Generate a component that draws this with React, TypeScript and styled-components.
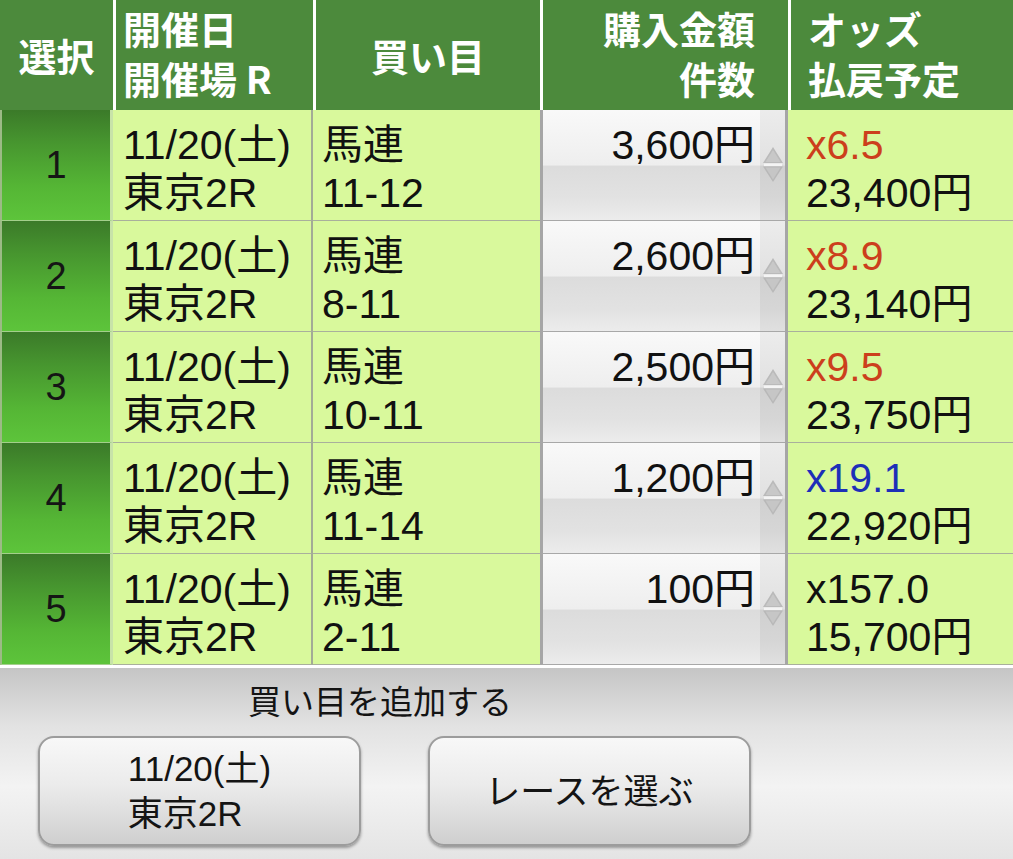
import React from 'react'
import styled, { createGlobalStyle } from 'styled-components'

const GlobalStyle = createGlobalStyle`
  html, body {
    margin: 0;
    padding: 0;
    background: #e6e6e6;
  }
  body {
    font-family: "Liberation Sans", "Noto Sans CJK JP", sans-serif;
    color: #111;
  }
  * {
    box-sizing: border-box;
  }
`

const COLS = '113px 200px 227px 248px 225px'

interface Bet {
  no: number
  date: string
  place: string
  type: string
  combo: string
  amount: string
  odds: string
  oddsColor: string
  payout: string
}

const bets: Bet[] = [
  { no: 1, date: '11/20(土)', place: '東京2R', type: '馬連', combo: '11-12', amount: '3,600円', odds: 'x6.5', oddsColor: '#cc3f1c', payout: '23,400円' },
  { no: 2, date: '11/20(土)', place: '東京2R', type: '馬連', combo: '8-11', amount: '2,600円', odds: 'x8.9', oddsColor: '#cc3f1c', payout: '23,140円' },
  { no: 3, date: '11/20(土)', place: '東京2R', type: '馬連', combo: '10-11', amount: '2,500円', odds: 'x9.5', oddsColor: '#cc3f1c', payout: '23,750円' },
  { no: 4, date: '11/20(土)', place: '東京2R', type: '馬連', combo: '11-14', amount: '1,200円', odds: 'x19.1', oddsColor: '#1d2fb8', payout: '22,920円' },
  { no: 5, date: '11/20(土)', place: '東京2R', type: '馬連', combo: '2-11', amount: '100円', odds: 'x157.0', oddsColor: '#111', payout: '15,700円' },
]

const Stepper = () => (
  <svg width="20" height="36" viewBox="0 0 20 36">
    <polygon points="10,0 20,16 0,16" fill="#bababa" />
    <polygon points="10,3 17.5,15 2.5,15" fill="#c8c8c8" />
    <rect x="1" y="16.5" width="18" height="2.5" fill="#f4f4f4" />
    <polygon points="0,19.5 20,19.5 10,35" fill="#b8b8b8" />
    <polygon points="2.5,20.5 17.5,20.5 10,32.5" fill="#c6c6c6" />
  </svg>
)

const App: React.FC = () => {
  return (
    <Screen>
      <GlobalStyle />
      <HeaderRow>
        <HeadCell $align="center">選択</HeadCell>
        <HeadCell $pad="0 0 4px 7px">
          <div>開催日</div>
          <div>開催場 R</div>
        </HeadCell>
        <HeadCell $align="center">買い目</HeadCell>
        <HeadCell $align="right" $pad="0 33px 4px 0">
          <div>購入金額</div>
          <div>件数</div>
        </HeadCell>
        <HeadCell $pad="0 0 4px 17px">
          <div>オッズ</div>
          <div>払戻予定</div>
        </HeadCell>
      </HeaderRow>

      {bets.map((b) => (
        <BodyRow key={b.no}>
          <SelectCell>{b.no}</SelectCell>
          <TextCell $pad="10px" $divider>
            <div>{b.date}</div>
            <div>{b.place}</div>
          </TextCell>
          <TextCell $pad="9px">
            <div>{b.type}</div>
            <div>{b.combo}</div>
          </TextCell>
          <AmountCell>
            <AmountValue>{b.amount}</AmountValue>
            <StepperBox>
              <Stepper />
            </StepperBox>
          </AmountCell>
          <TextCell $pad="18px">
            <Odds $color={b.oddsColor}>{b.odds}</Odds>
            <div>{b.payout}</div>
          </TextCell>
        </BodyRow>
      ))}

      <Footer>
        <FooterLabel>買い目を追加する</FooterLabel>
        <ButtonRow>
          <GlossButton>
            <ButtonText>
              <div>11/20(土)</div>
              <div>東京2R</div>
            </ButtonText>
          </GlossButton>
          <GlossButton>
            <ButtonText>レースを選ぶ</ButtonText>
          </GlossButton>
        </ButtonRow>
      </Footer>
    </Screen>
  )
}

const Screen = styled.div`
  width: 1013px;
  height: 859px;
  overflow: hidden;
  display: flex;
  flex-direction: column;
`

const HeaderRow = styled.div`
  display: grid;
  grid-template-columns: ${COLS};
  height: 110px;
  flex-shrink: 0;
  background: #4c8a3c;
  color: #fff;
  font-family: "Noto Sans CJK JP", "Liberation Sans", sans-serif;
  font-weight: bold;
  font-size: 38px;
  line-height: 50px;
`

const HeadCell = styled.div<{ $align?: 'left' | 'center' | 'right'; $pad?: string }>`
  display: flex;
  flex-direction: column;
  justify-content: center;
  text-align: ${(p) => p.$align ?? 'left'};
  padding: ${(p) => p.$pad ?? '0'};
  border-left: 3px solid #fff;
  white-space: nowrap;
  &:first-child {
    border-left: none;
  }
`

const BodyRow = styled.div`
  display: grid;
  grid-template-columns: ${COLS};
  height: 111px;
  flex-shrink: 0;
`

const SelectCell = styled.div`
  display: flex;
  align-items: center;
  justify-content: center;
  font-size: 38px;
  color: #151515;
  background: linear-gradient(to bottom, #3b7a29 0%, #47962f 30%, #55b635 70%, #5dc43b 100%);
  border-left: 2px solid #9cba86;
  border-right: 3px solid #c8e3a9;
  border-bottom: 1px solid #a3cf8b;
`

const TextCell = styled.div<{ $pad: string; $divider?: boolean }>`
  background: #d9f99c;
  padding: 11px 0 0 ${(p) => p.$pad};
  font-size: 41px;
  line-height: 48px;
  white-space: nowrap;
  border-bottom: 1px solid #a9b09c;
  border-right: ${(p) => (p.$divider ? '2px solid #a3ab96' : 'none')};
`

const Odds = styled.div<{ $color: string }>`
  color: ${(p) => p.$color};
`

const AmountCell = styled.div`
  display: flex;
  border-left: 3px solid #a6a6a6;
  border-right: 3px solid #a6a6a6;
  border-bottom: 1px solid #a8a8a8;
  background: linear-gradient(
    to bottom,
    #f9f9f9 0%,
    #eeeeee 50%,
    #dcdcdc 51%,
    #e2e2e2 80%,
    #ececec 100%
  );
`

const AmountValue = styled.div`
  flex: 1;
  text-align: right;
  padding: 11px 5px 0 0;
  font-size: 41px;
  line-height: 48px;
  white-space: nowrap;
`

const StepperBox = styled.div`
  width: 25px;
  display: flex;
  align-items: center;
  justify-content: center;
  background: rgba(0, 0, 0, 0.05);
`

const Footer = styled.div`
  flex: 1;
  border-top: 3px solid #fff;
  background: linear-gradient(to bottom, #c5c5c5 0%, #e2e2e2 30%, #f3f3f3 62%, #e4e4e4 100%);
`

const FooterLabel = styled.div`
  width: 760px;
  text-align: center;
  padding-top: 15px;
  font-size: 33px;
  line-height: 40px;
  color: #141414;
`

const ButtonRow = styled.div`
  display: flex;
  gap: 67px;
  padding-left: 38px;
  margin-top: 13px;
`

const GlossButton = styled.div`
  width: 323px;
  height: 110px;
  border: 2px solid #9c9c9c;
  border-radius: 16px;
  background: linear-gradient(to bottom, #f8f8f8 0%, #ebebeb 45%, #dcdcdc 75%, #cfcfcf 100%);
  box-shadow: 0 2px 3px rgba(0, 0, 0, 0.35);
  display: flex;
  align-items: center;
  justify-content: center;
`

const ButtonText = styled.div`
  font-size: 35px;
  line-height: 45px;
  text-align: left;
  color: #141414;
  white-space: nowrap;
`

export default App
